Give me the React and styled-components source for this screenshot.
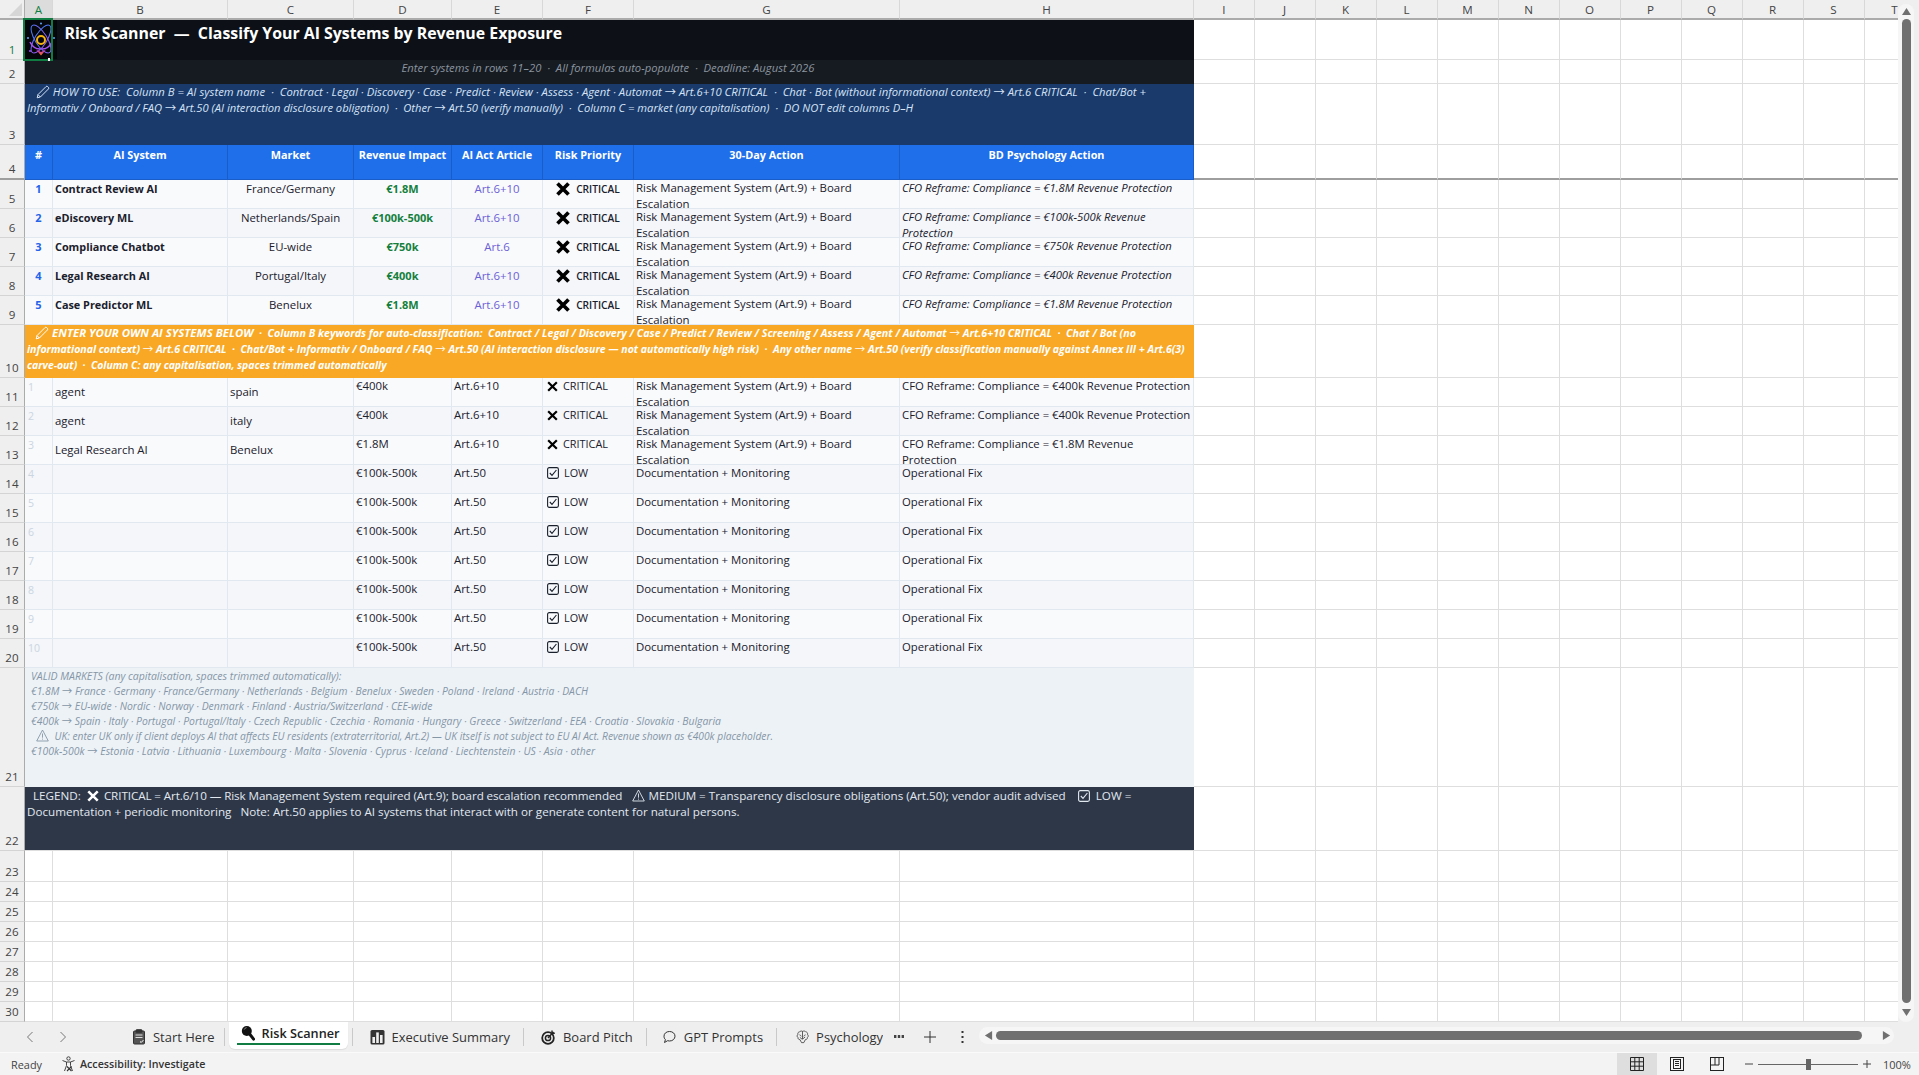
import React from 'react';
import styled, { createGlobalStyle } from 'styled-components';

const Global = createGlobalStyle`
  html, body { margin: 0; padding: 0; width: 1919px; height: 1075px; overflow: hidden; background: #fff; }
  body { font-family: "Open Sans", "DejaVu Sans", sans-serif; }
  * { box-sizing: border-box; }
`;

const COLS = '25px 28px 175px 126px 98px 91px 91px 266px 294px 60.5px repeat(11, 61px)';
const ROWS = '20px 40px 24px 61px 35px repeat(5, 29px) 53px repeat(10, 29px) 119px 64px 31px repeat(7, 20px)';
const LETTERS = 'ABCDEFGHIJKLMNOPQRST'.split('');
const EXTRA = Array.from({ length: 12 });

const Page = styled.div`
  width: 1919px; height: 1075px; display: flex; flex-direction: column; overflow: hidden;
`;
const Workspace = styled.div`
  height: 1022px; display: flex; flex: none;
`;
const SheetClip = styled.div`
  width: 1898px; height: 1022px; overflow: hidden; flex: none;
`;
const Sheet = styled.div`
  display: grid; grid-template-columns: ${COLS}; grid-template-rows: ${ROWS}; width: max-content;
  color: #1a202c; font-size: 11.4px; line-height: 16px;
`;
const Corner = styled.div`
  background: #efefef; border-right: 1px solid #ababab; border-bottom: 2px solid #ababab;
  display: flex; align-items: flex-end; justify-content: flex-end; padding: 0 2px 2px 0;
`;
const CornerMark = styled.div`
  width: 0; height: 0; border-left: 13px solid transparent; border-bottom: 13px solid #d6d6d6;
`;
const ColHead = styled.div`
  background: ${p => (p.$active ? '#dcdcdc' : '#efefef')};
  color: ${p => (p.$active ? '#107c41' : '#444')};
  border-right: 1px solid #d8d8d8;
  border-bottom: 2px solid ${p => (p.$active ? '#107c41' : '#ababab')};
  font-size: 11.6px; line-height: 20px; text-align: center;
`;
const RowHead = styled.div`
  background: #efefef; color: ${p => (p.$active ? '#107c41' : '#444')};
  border-right: 1px solid #ababab;
  border-bottom: ${p => (p.$freeze ? '2px solid #9e9e9e' : '1px solid #d4d4d4')};
  font-size: 11.6px; line-height: 16px; text-align: center;
  display: flex; align-items: flex-end; justify-content: center; padding-bottom: 1px;
`;
const Blank = styled.div`
  background: #fff;
  border-right: 1px solid #dedede;
  border-bottom: ${p => (p.$freeze ? '2px solid #9e9e9e' : '1px solid #dedede')};
`;
const TitleBanner = styled.div`
  grid-column: span 8; position: relative; background: #0d1117; color: #fff;
  font-size: 15.87px; font-weight: 700; line-height: 22px; padding: 2px 0 0 39.500px; white-space: pre;
`;
const SubBanner = styled.div`
  grid-column: span 8; background: #161b22; color: #8b949e; font-style: italic;
  font-size: 11.25px; text-align: center; white-space: pre; padding-right: 3px;
`;
const NoteBanner = styled.div`
  grid-column: span 8; background: ${p => p.$bg}; color: ${p => p.$fg};
  font-size: ${p => p.$size}; font-weight: ${p => p.$weight || 400}; font-style: ${p => (p.$italic ? 'italic' : 'normal')};
  line-height: ${p => p.$lh || '16px'}; padding: ${p => p.$pad || '0 2px'}; overflow: hidden;
  border-bottom: 1px solid ${p => p.$edge || p.$bg};
`;
const Line = styled.div`
  white-space: pre; font-size: ${p => p.$size || 'inherit'}; letter-spacing: ${p => p.$ls || 'normal'};
`;
const Emph = styled.span`
  font-size: ${p => p.$size || 'inherit'}; letter-spacing: ${p => p.$ls || 'normal'};
`;
const Arw = styled.span`
  font-family: "Noto Sans CJK SC", "DejaVu Sans", sans-serif; font-style: normal; font-weight: 400; line-height: 0;
  letter-spacing: 0;
`;
const HeadCell = styled.div`
  background: #1f6feb; color: #fff; font-weight: 700; font-size: 10.85px; text-align: center;
  padding-top: 2px; border-right: 1px solid #1a5dc8; border-bottom: 1px solid #1a5dc8; white-space: nowrap;
`;
const Data = styled.div`
  background: ${p => (p.$alt ? '#f4f6fa' : '#f9fafc')};
  border-right: 1px solid #e2e8f0; border-bottom: 1px solid #e2e8f0; overflow: hidden;
  padding: ${p => p.$pad || '0 2px'}; text-align: ${p => p.$align || 'left'};
  font-size: ${p => p.$size || '11.4px'};
  font-weight: ${p => p.$weight || 400};
  font-style: ${p => (p.$italic ? 'italic' : 'normal')};
  color: ${p => p.$fg || '#1a202c'};
  display: ${p => (p.$middle ? 'flex' : 'block')}; align-items: center;
  white-space: ${p => (p.$lines ? 'pre' : 'normal')};
`;
const Priority = styled.div`
  background: ${p => (p.$alt ? '#f4f6fa' : '#f9fafc')};
  border-right: 1px solid #e2e8f0; border-bottom: 1px solid #e2e8f0; overflow: hidden;
  display: flex; align-items: flex-start; gap: ${p => (p.$strong ? '6px' : '5px')};
  justify-content: ${p => (p.$strong ? 'center' : 'flex-start')};
  padding: ${p => (p.$strong ? '1px 0 0' : '0 0 0 4px')};
  font-weight: ${p => (p.$strong ? 600 : 400)};
  font-size: ${p => (p.$strong ? '10.2px' : '10.87px')};
`;
const IconSlot = styled.span`
  display: inline-flex; flex: none; height: 16px; align-items: center;
`;
const InlineIcon = styled.svg`
  display: inline-block; vertical-align: ${p => p.$va || '-2px'};
  margin: ${p => p.$m || '0'};
`;
const Logo = styled.svg`
  position: absolute; left: 0; top: 0; width: 32px; height: 39px;
`;
const Selection = styled.div`
  position: absolute; left: -2px; top: -2px; width: 30px; height: 43px; border: 2px solid #107c41;
  &::after {
    content: ''; position: absolute; right: 1px; bottom: -2px; width: 2px; height: 3px; background: #fff;
  }
`;

/* scroll bars */
const VScroll = styled.div`
  width: 21px; flex: none; background: #efefef; position: relative;
  display: flex; flex-direction: column; align-items: center; padding: 4px 5px 0 0;
`;
const VTrack = styled.div`
  width: 16px; height: 1019px; background: #f6f6f6; border-radius: 8px;
  display: flex; flex-direction: column; align-items: center; padding-top: 3px;
`;
const VThumb = styled.div`
  width: 9px; height: 984px; background: #707070; border-radius: 5px; margin: 3px 0 5px;
`;
const Tabs = styled.div`
  height: 31px; flex: none; background: #efefef; display: flex; align-items: center; color: #333;
  font-size: 12.96px; border-bottom: 1px solid #fafafa;
`;
const TabNav = styled.div`
  width: 122px; flex: none; display: flex; padding-left: 26px; gap: 25px; color: #777;
`;
const Tab = styled.div`
  display: flex; align-items: center; gap: 7px; height: 18px; flex: none; white-space: nowrap; overflow: hidden;
  padding: 0 ${p => p.$pr || '13px'} 0 ${p => p.$pl || '17px'};
  width: ${p => p.$w || 'auto'};
`;
const ActiveTab = styled.div`
  position: relative; flex: none; align-self: flex-start; width: 119px; height: 27px; margin: 0 4px;
  background: #fff; border-radius: 0 0 6px 6px; box-shadow: 0 1px 1px rgba(0,0,0,.08);
  display: flex; align-items: center; gap: 7px; padding: 0 0 5px 12px; font-weight: 600; color: #222; white-space: nowrap;
  font-size: 12.7px;
  &::after { content: ''; position: absolute; left: 8px; right: 8px; top: 21px; height: 2px; background: #107c41; }
`;
const TabSep = styled.div`
  width: 1px; height: 18px; background: #c9c9c9; flex: none;
`;
const TabTools = styled.div`
  width: 96px; flex: none; display: flex; align-items: center; padding-left: 11px; color: #333;
`;
const ToolPlus = styled.svg`
  margin: 0 25px 0 20px;
`;
const HTrack = styled.div`
  width: 915px; height: 17px; flex: none; background: #f6f6f6; border-radius: 9px; margin-top: -3px;
  display: flex; align-items: center; padding: 0 4px 0 5px;
`;
const HThumb = styled.div`
  width: 866px; height: 9px; background: #707070; border-radius: 5px; flex: none; margin: 0 20px 0 3px;
`;
const Status = styled.div`
  height: 22px; flex: none; background: #f3f3f3; display: flex; align-items: center; font-size: 10.9px; color: #444;
`;
const Ready = styled.div`
  width: 61px; padding-left: 11px; flex: none; padding-top: 1px;
`;
const Accessibility = styled.div`
  display: flex; align-items: center; gap: 4px; font-weight: 600; color: #333; font-size: 10.7px; flex: 1;
`;
const ViewBtn = styled.div`
  width: 40px; height: 22px; flex: none; display: flex; align-items: center; justify-content: center;
  background: ${p => (p.$on ? '#dedede' : 'transparent')};
`;
const ZoomBox = styled.div`
  width: 182px; flex: none; display: flex; align-items: center; padding-left: 8px; color: #444;
`;
const ZoomTrack = styled.div`
  width: 100px; height: 1px; background: #666; margin: 0 5px; position: relative; flex: none;
`;
const ZoomThumb = styled.div`
  position: absolute; left: 48px; top: -5px; width: 5px; height: 11px; background: #666;
`;
const ZoomPct = styled.div`
  margin-left: 12px; font-size: 11px;
`;

/* icons */
const Pencil = ({ c = '#fff' }) => (
  <InlineIcon width="14" height="14" viewBox="0 0 14 14" $va="-3px" fill="none" stroke={c} strokeWidth="1">
    <path d="M1.2 12.8 2 9.6 10 1.6a1.2 1.2 0 0 1 1.7 0l.7.7a1.2 1.2 0 0 1 0 1.7l-8 8z" />
    <path d="M2 9.6 4.4 12" />
  </InlineIcon>
);
const XMark = ({ s = 14, c = '#000', w = 3.1, m }) => (
  <InlineIcon width={s} height={s} viewBox="0 0 14 14" fill="none" stroke={c} strokeWidth={w} $va="-2px" $m={m}>
    <path d="M1.5 1.5 12.5 12.5M12.5 1.5 1.5 12.5" />
  </InlineIcon>
);
const CheckBox = ({ s = 12, c = '#1a202c', m }) => (
  <InlineIcon width={s} height={s} viewBox="0 0 12 12" fill="none" stroke={c} $va="-2px" $m={m}>
    <rect x=".6" y=".6" width="10.8" height="10.8" rx="1.6" strokeWidth="1.1" />
    <path d="M2.8 6 5 8.3 9.4 3" strokeWidth="1.1" />
  </InlineIcon>
);
const Warn = ({ c = '#8596a6', s = 13, m }) => (
  <InlineIcon width={s} height={s} viewBox="0 0 13 13" fill="none" stroke={c} strokeWidth=".9" $va="-2px" $m={m}>
    <path d="M6.5 1 12.3 12H.7z" />
    <path d="M6.5 4.5v4.2M6.5 9.6v1" />
  </InlineIcon>
);
const Arrow = ({ d, c = '#707070', s = 9 }) => (
  <svg width={s} height={s} viewBox="0 0 10 10" fill={c} style={{ flex: 'none' }}>
    {d === 'up' && <path d="M5 1 10 9H0z" />}
    {d === 'down' && <path d="M5 9 0 1h10z" />}
    {d === 'left' && <path d="M1 5 9 0v10z" />}
    {d === 'right' && <path d="M9 5 1 0v10z" />}
  </svg>
);
const Chevron = ({ left }) => (
  <svg width="8" height="12" viewBox="0 0 8 12" fill="none" stroke="#777">
    <path d={left ? 'M6.5 1 1.5 6l5 5' : 'M1.5 1l5 5-5 5'} />
  </svg>
);
const IconClipboard = () => (
  <svg width="14" height="16" viewBox="0 0 14 16" fill="none" stroke="#333">
    <rect x="1.5" y="2" width="11" height="13" rx="1" fill="#555" />
    <rect x="4" y=".7" width="6" height="2.6" rx=".6" fill="#333" />
    <path d="M3.5 6h7M3.5 8.5h7" stroke="#ddd" />
    <path d="M8 12.5l1.2 1 2.2-2.4" stroke="#fff" />
  </svg>
);
const IconSearch = () => (
  <svg width="14" height="16" viewBox="0 0 14 16">
    <circle cx="5.8" cy="6" r="5" fill="#111" />
    <path d="M9 9.5l3.6 4.6" stroke="#111" strokeWidth="3" strokeLinecap="round" />
    <path d="M3.2 4.6a3 3 0 0 1 2.4-2" stroke="#888" strokeWidth="1" fill="none" />
  </svg>
);
const IconBars = () => (
  <svg width="15" height="16" viewBox="0 0 15 16">
    <rect x=".5" y="1" width="14" height="14.5" rx="1.5" fill="#333" />
    <rect x="2.4" y="8" width="2.6" height="6" fill="#eee" />
    <rect x="6.2" y="3.4" width="2.6" height="10.6" fill="#eee" />
    <rect x="10" y="6" width="2.6" height="8" fill="#eee" />
  </svg>
);
const IconTarget = () => (
  <svg width="15" height="16" viewBox="0 0 15 16" fill="none" stroke="#222">
    <circle cx="7" cy="9" r="5.8" strokeWidth="1.8" />
    <circle cx="7" cy="9" r="2.6" strokeWidth="1.5" />
    <path d="M7 9 12.5 3" strokeWidth="1.5" />
    <path d="M11 1.5v2.8h2.8" strokeWidth="1.4" />
  </svg>
);
const IconBubble = () => (
  <svg width="15" height="14" viewBox="0 0 14 14" fill="none" stroke="#333">
    <path d="M7 1.5c3.2 0 5.5 2 5.5 4.7S10.200 11 7 11c-.7 0-1.300-.1-1.900-.3L2 12.500l.9-2.900C1.900 8.700 1.500 7.500 1.500 6.200 1.500 3.500 3.800 1.500 7 1.500z" />
  </svg>
);
const IconBrain = () => (
  <svg width="15" height="16" viewBox="0 0 15 16" fill="none" stroke="#333" strokeWidth=".9">
    <path d="M7.500 1.500c-1-.7-2.600-.5-3.300.6-1.500 0-2.500 1.400-2 2.800C1 5.900 1 7.800 2.200 8.500c-.1 1.500 1 2.700 2.400 2.500.4 1.200 1.300 2.300 1.800 3.500h2.600c.6-1.200 1.300-2.300 1.800-3.500 1.400.2 2.500-1 2.400-2.500 1.200-.7 1.200-2.600 0-3.600.5-1.400-.5-2.800-2-2.800-.7-1.100-2.300-1.300-3.300-.6z" />
    <path d="M7.500 1.500v9M4 5.500c1 .2 1.800.8 2 1.800M11 5.500c-1 .2-1.800.8-2 1.800M4.500 8.500l2.500 2M10.500 8l-3 2.500" />
  </svg>
);
const IconAccess = () => (
  <svg width="15" height="16" viewBox="0 0 15 16" fill="none" stroke="#333" strokeWidth=".9">
    <circle cx="7.500" cy="2.500" r="1.700" />
    <path d="M1.500 4.500l4 1.500h4l4-1.500M5.500 6v3.500L3.500 15M9.500 6v3.500l2 5.500" />
    <path d="M6 10.500l4.500 4.500M10.500 10.500 6 15" strokeWidth="1.100" />
  </svg>
);
const IconGrid = () => (
  <svg width="14" height="14" viewBox="0 0 14 14" fill="none" stroke="#222">
    <path d="M.5.5h13v13H.5zM.5 4.800h13M.5 9.200h13M4.800.5v13M9.200.5v13" />
  </svg>
);
const IconPage = () => (
  <svg width="14" height="14" viewBox="0 0 14 14" fill="none" stroke="#222">
    <rect x=".5" y=".5" width="13" height="13" />
    <rect x="3.500" y="2.500" width="7" height="9" />
    <path d="M5 4.500h4M5 6.500h4M5 8.500h4" />
  </svg>
);
const IconBreak = () => (
  <svg width="14" height="14" viewBox="0 0 14 14" fill="none" stroke="#222">
    <rect x=".5" y=".5" width="13" height="13" />
    <path d="M5 .5v7.500h4V.5M.5 8h4.500" />
  </svg>
);

const LogoArt = () => (
  <Logo viewBox="0 0 32 39">
    <defs>
      <linearGradient id="orb" x1="0" y1="0" x2="1" y2="1">
        <stop offset="0" stopColor="#3b82f6" />
        <stop offset="1" stopColor="#a855f7" />
      </linearGradient>
      <linearGradient id="vee" x1="0" y1="0" x2="0" y2="1">
        <stop offset="0" stopColor="#c026d3" />
        <stop offset="1" stopColor="#f97316" />
      </linearGradient>
    </defs>
    <rect width="32" height="39" fill="#05050c" />
    <g fill="none" stroke="url(#orb)" strokeWidth="1">
      <ellipse cx="16" cy="19" rx="6" ry="16" transform="rotate(-32 16 19)" />
      <ellipse cx="16" cy="19" rx="6" ry="16" transform="rotate(32 16 19)" />
    </g>
    <path d="M5 22c3 6 7 7 10 7M27 22c-3 6-7 7-10 7" fill="none" stroke="#a855f7" strokeWidth="1.600" />
    <circle cx="16" cy="20" r="4" fill="#05050c" stroke="#f5b30b" strokeWidth="2" />
    <path d="M11 29.500l5 6 5-6-5 2.500z" fill="url(#vee)" />
    <g fill="#60a5fa">
      <circle cx="16" cy="3.500" r="1" />
      <circle cx="3" cy="18" r="1" />
      <circle cx="29" cy="18" r="1" />
      <circle cx="5" cy="31" r="1" fill="#a855f7" />
      <circle cx="27" cy="31" r="1" fill="#a855f7" />
    </g>
  </Logo>
);

const arrows = s => s.split('→').flatMap((part, i) => (i ? [<Arw key={i}>→</Arw>, part] : [part]));

const ACTION = 'Risk Management System (Art.9) + Board Escalation';
const TOP_ROWS = [
  ['1', 'Contract Review AI', 'France/Germany', '€1.8M', 'Art.6+10', 'CFO Reframe: Compliance = €1.8M Revenue Protection'],
  ['2', 'eDiscovery ML', 'Netherlands/Spain', '€100k-500k', 'Art.6+10', 'CFO Reframe: Compliance = €100k-500k Revenue Protection'],
  ['3', 'Compliance Chatbot', 'EU-wide', '€750k', 'Art.6', 'CFO Reframe: Compliance = €750k Revenue Protection'],
  ['4', 'Legal Research AI', 'Portugal/Italy', '€400k', 'Art.6+10', 'CFO Reframe: Compliance = €400k Revenue Protection'],
  ['5', 'Case Predictor ML', 'Benelux', '€1.8M', 'Art.6+10', 'CFO Reframe: Compliance = €1.8M Revenue Protection'],
];
const INPUT_ROWS = [
  ['agent', 'spain', '€400k', 'Art.6+10', true, 'CFO Reframe: Compliance = €400k Revenue Protection'],
  ['agent', 'italy', '€400k', 'Art.6+10', true, 'CFO Reframe: Compliance = €400k Revenue Protection'],
  ['Legal Research AI', 'Benelux', '€1.8M', 'Art.6+10', true, 'CFO Reframe: Compliance = €1.8M Revenue\nProtection'],
  ...Array.from({ length: 7 }, () => ['', '', '€100k-500k', 'Art.50', false, 'Operational Fix']),
];
const HEADERS = ['#', 'AI System', 'Market', 'Revenue Impact', 'AI Act Article', 'Risk Priority', '30-Day Action', 'BD Psychology Action'];

const Fill = ({ freeze }) => EXTRA.map((_, i) => <Blank key={i} $freeze={freeze} />);

export default function App() {
  return (
    <Page>
      <Global />
      <Workspace>
        <SheetClip>
          <Sheet>
            <Corner><CornerMark /></Corner>
            {LETTERS.map((l, i) => <ColHead key={l} $active={i === 0}>{l}</ColHead>)}

            <RowHead $active>1</RowHead>
            <TitleBanner>
              {'Risk Scanner  —  Classify Your AI Systems by Revenue Exposure'}
              <LogoArt />
              <Selection />
            </TitleBanner>
            <Fill />

            <RowHead>2</RowHead>
            <SubBanner>{'Enter systems in rows 11–20  ·  All formulas auto-populate  ·  Deadline: August 2026'}</SubBanner>
            <Fill />

            <RowHead>3</RowHead>
            <NoteBanner $bg="#1a3a6b" $fg="#d5e3f7" $size="11.25px" $italic>
              <Line $ls=".04px">{'   '}<Pencil c="#d5e3f7" />{' '}{arrows('HOW TO USE:  Column B = AI system name  ·  Contract · Legal · Discovery · Case · Predict · Review · Assess · Agent · Automat → Art.6+10 CRITICAL  ·  Chat · Bot (without informational context) → Art.6 CRITICAL  ·  Chat/Bot +')}</Line>
              <Line $size="11.2px">{arrows('Informativ / Onboard / FAQ → Art.50 (AI interaction disclosure obligation)  ·  Other → Art.50 (verify manually)  ·  Column C = market (any capitalisation)  ·  DO NOT edit columns D–H')}</Line>
            </NoteBanner>
            <Fill />

            <RowHead $freeze>4</RowHead>
            {HEADERS.map(h => <HeadCell key={h}>{h}</HeadCell>)}
            <Fill freeze />

            {TOP_ROWS.map(([n, sys, market, rev, art, bd], i) => {
              const alt = i % 2 === 1;
              return (
                <React.Fragment key={n}>
                  <RowHead>{i + 5}</RowHead>
                  <Data $alt={alt} $align="center" $weight={700} $fg="#2563eb" $size="11px" $pad="1px 0 0">{n}</Data>
                  <Data $alt={alt} $weight={700} $size="10.85px" $pad="1px 2px 0">{sys}</Data>
                  <Data $alt={alt} $align="center" $pad="1px 2px 0">{market}</Data>
                  <Data $alt={alt} $align="center" $weight={700} $fg="#15803d" $size="11px" $pad="1px 0 0">{rev}</Data>
                  <Data $alt={alt} $align="center" $fg="#6b5fd6" $pad="1px 0 0">{art}</Data>
                  <Priority $alt={alt} $strong><IconSlot><XMark s={14} w={3.7} /></IconSlot><span>CRITICAL</span></Priority>
                  <Data $alt={alt} $pad="0 0 0 2px">{ACTION}</Data>
                  <Data $alt={alt} $italic $size="11.25px">{bd}</Data>
                  <Fill />
                </React.Fragment>
              );
            })}

            <RowHead>10</RowHead>
            <NoteBanner $bg="#f9a825" $fg="#fff" $size="10.4px" $weight={700} $italic>
              <Line $size="10.65px">{'   '}<Pencil />{' '}<Emph $size="11.45px">ENTER YOUR OWN AI SYSTEMS BELOW</Emph>{arrows('  ·  Column B keywords for auto-classification:  Contract / Legal / Discovery / Case / Predict / Review / Screening / Assess / Agent / Automat → Art.6+10 CRITICAL  ·  Chat / Bot (no')}</Line>
              <Line $size="10.53px">{arrows('informational context) → Art.6 CRITICAL  ·  Chat/Bot + Informativ / Onboard / FAQ → Art.50 (AI interaction disclosure — not automatically high risk)  ·  Any other name → Art.50 (verify classification manually against Annex III + Art.6(3)')}</Line>
              <Line>{'carve-out)  ·  Column C: any capitalisation, spaces trimmed automatically'}</Line>
            </NoteBanner>
            <Fill />

            {INPUT_ROWS.map(([sys, market, rev, art, crit, bd], i) => {
              const alt = i % 2 === 1;
              return (
                <React.Fragment key={i}>
                  <RowHead>{i + 11}</RowHead>
                  <Data $alt={alt} $fg="#cbd5e0" $size="10.5px" $pad="1px 0 0 3px">{i + 1}</Data>
                  <Data $alt={alt} $middle>{sys}</Data>
                  <Data $alt={alt} $middle>{market}</Data>
                  <Data $alt={alt}>{rev}</Data>
                  <Data $alt={alt}>{art}</Data>
                  {crit
                    ? <Priority $alt={alt}><IconSlot><XMark s={11} w={2.8} /></IconSlot><span>CRITICAL</span></Priority>
                    : <Priority $alt={alt}><IconSlot><CheckBox /></IconSlot><span>LOW</span></Priority>}
                  <Data $alt={alt} $pad="0 0 0 2px">{crit ? ACTION : 'Documentation + Monitoring'}</Data>
                  <Data $alt={alt} $lines $size="11.34px" $pad="0 0 0 2px">{bd}</Data>
                  <Fill />
                </React.Fragment>
              );
            })}

            <RowHead>21</RowHead>
            <NoteBanner $bg="#edf2f7" $fg="#8596a6" $size="10.4px" $italic $lh="15px" $pad="1px 6px 0">
              <Line $size="10.5px">VALID MARKETS (any capitalisation, spaces trimmed automatically):</Line>
              <Line $size="10.32px">{arrows('€1.8M → France · Germany · France/Germany · Netherlands · Belgium · Benelux · Sweden · Poland · Ireland · Austria · DACH')}</Line>
              <Line>{arrows('€750k → EU-wide · Nordic · Norway · Denmark · Finland · Austria/Switzerland · CEE-wide')}</Line>
              <Line>{arrows('€400k → Spain · Italy · Portugal · Portugal/Italy · Czech Republic · Czechia · Romania · Hungary · Greece · Switzerland · EEA · Croatia · Slovakia · Bulgaria')}</Line>
              <Line $size="10.23px">{'  '}<Warn />{'  UK: enter UK only if client deploys AI that affects EU residents (extraterritorial, Art.2) — UK itself is not subject to EU AI Act. Revenue shown as €400k placeholder.'}</Line>
              <Line>{arrows('€100k-500k → Estonia · Latvia · Lithuania · Luxembourg · Malta · Slovenia · Cyprus · Iceland · Liechtenstein · US · Asia · other')}</Line>
            </NoteBanner>
            <Fill />

            <RowHead>22</RowHead>
            <NoteBanner $bg="#2d3748" $fg="#e2e8f0" $size="11.65px" $pad="1px 2px 0" $edge="#dedede">
              <Line>{'  LEGEND:  '}<XMark s={12} c="#fff" w={3} m="0 2px 0 0" />{' '}<Emph $ls="-.085px">CRITICAL = Art.6/10 — Risk Management System required (Art.9); board escalation recommended</Emph>{'  '}<Warn c="#e2e8f0" m="0 0 0 4px" />{' MEDIUM = Transparency disclosure obligations (Art.50); vendor audit advised   '}<CheckBox c="#e2e8f0" m="0 3px" />{' LOW ='}</Line>
              <Line>{'Documentation + periodic monitoring   Note: Art.50 applies to AI systems that interact with or generate content for natural persons.'}</Line>
            </NoteBanner>
            <Fill />

            {Array.from({ length: 8 }, (_, i) => (
              <React.Fragment key={i}>
                <RowHead>{i + 23}</RowHead>
                {Array.from({ length: 8 }, (_, j) => <Blank key={j} />)}
                <Fill />
              </React.Fragment>
            ))}
          </Sheet>
        </SheetClip>
        <VScroll>
          <VTrack>
            <Arrow d="up" />
            <VThumb />
            <Arrow d="down" />
          </VTrack>
        </VScroll>
      </Workspace>

      <Tabs>
        <TabNav><Chevron left /><Chevron /></TabNav>
        <Tab $pl="10px" $pr="9px"><IconClipboard />Start Here</Tab>
        <TabSep />
        <ActiveTab><IconSearch />Risk Scanner</ActiveTab>
        <TabSep />
        <Tab><IconBars />Executive Summary</Tab>
        <TabSep />
        <Tab><IconTarget />Board Pitch</Tab>
        <TabSep />
        <Tab $pl="15px"><IconBubble />GPT Prompts</Tab>
        <TabSep />
        <Tab $pl="19px" $w="106px" $pr="0"><IconBrain />Psychology</Tab>
        <TabTools>
          <svg width="10" height="4" viewBox="0 0 10 4" fill="#444"><rect width="2.4" height="3" /><rect x="3.8" width="2.4" height="3" /><rect x="7.6" width="2.4" height="3" /></svg>
          <ToolPlus width="12" height="12" viewBox="0 0 12 12" stroke="#333" fill="none"><path d="M6 0v12M0 6h12" /></ToolPlus>
          <svg width="3" height="12" viewBox="0 0 3 12" fill="#333"><rect x=".5" width="2" height="2" /><rect x=".5" y="5" width="2" height="2" /><rect x=".5" y="10" width="2" height="2" /></svg>
        </TabTools>
        <HTrack>
          <Arrow d="left" />
          <HThumb />
          <Arrow d="right" />
        </HTrack>
      </Tabs>

      <Status>
        <Ready>Ready</Ready>
        <Accessibility><IconAccess />Accessibility: Investigate</Accessibility>
        <ViewBtn $on><IconGrid /></ViewBtn>
        <ViewBtn><IconPage /></ViewBtn>
        <ViewBtn><IconBreak /></ViewBtn>
        <ZoomBox>
          <svg width="8" height="8" viewBox="0 0 8 8" stroke="#444"><path d="M0 4h8" /></svg>
          <ZoomTrack><ZoomThumb /></ZoomTrack>
          <svg width="8" height="8" viewBox="0 0 8 8" stroke="#444" fill="none"><path d="M0 4h8M4 0v8" /></svg>
          <ZoomPct>100%</ZoomPct>
        </ZoomBox>
      </Status>
    </Page>
  );
}
